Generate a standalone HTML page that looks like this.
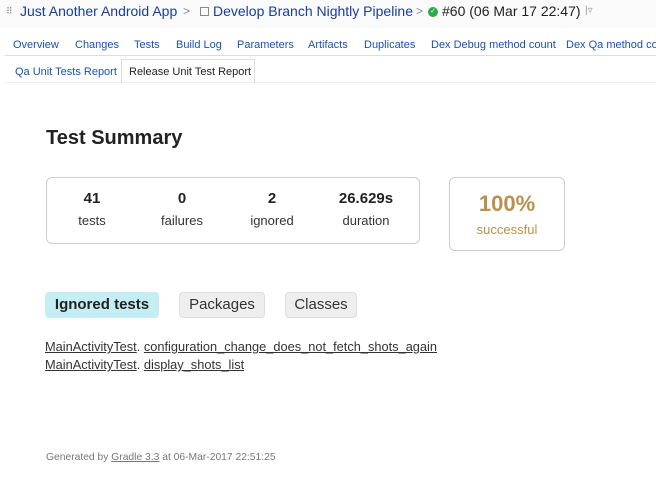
<!DOCTYPE html>
<html><head><style>
body{margin:0;width:656px;height:491px;background:#fff;font-family:"Liberation Sans",sans-serif;position:relative;overflow:hidden}
.a{position:absolute;white-space:nowrap}
.bc{top:3px;font-size:14px;color:#1a3d9c}
.tab{top:39px;font-size:11px;color:#1a52b0}
.num{font-size:15px;font-weight:bold;color:#222;text-align:center;width:80px}
.lbl{font-size:13px;color:#333;text-align:center;width:80px}
.btn{top:292px;height:26px;line-height:26px;font-size:15px;border-radius:4px;text-align:center}
.lnk{font-size:12.8px;color:#333;text-decoration:underline}
</style></head><body>
<div style="position:absolute;left:0;top:0;width:656px;height:28px;background:#fafafa"></div>
<div class="a" style="left:6px;top:6px;font-size:9px;color:#888">⠿</div>
<div class="a bc" style="left:20px">Just Another Android App</div>
<div class="a" style="left:183px;top:4px;font-size:12px;color:#888">&gt;</div>
<div class="a" style="left:200px;top:7px;width:7px;height:7px;border:1px solid #888"></div>
<div class="a bc" style="left:213px">Develop Branch Nightly Pipeline</div>
<div class="a" style="left:416px;top:4px;font-size:12px;color:#888">&gt;</div>
<div class="a" style="left:428px;top:7px;width:10px;height:10px;border-radius:50%;background:#2fa84f;color:#fff;font-size:7px;line-height:10px;text-align:center">✓</div>
<div class="a bc" style="left:442px;color:#222">#60 (06 Mar 17 22:47)</div>
<div class="a" style="left:585px;top:5px;font-size:10px;color:#999">|▿</div>
<div class="a tab" style="left:13px">Overview</div>
<div class="a tab" style="left:75px">Changes</div>
<div class="a tab" style="left:134px">Tests</div>
<div class="a tab" style="left:176px">Build Log</div>
<div class="a tab" style="left:237px">Parameters</div>
<div class="a tab" style="left:308px">Artifacts</div>
<div class="a tab" style="left:364px">Duplicates</div>
<div class="a tab" style="left:431px">Dex Debug method count</div>
<div class="a tab" style="left:566px">Dex Qa method count</div>
<div style="position:absolute;left:5px;top:55px;width:651px;height:1px;background:#ddd"></div>
<div class="a tab" style="left:15px;top:66px">Qa Unit Tests Report</div>
<div style="position:absolute;left:121px;top:59px;width:132px;height:23px;border:1px solid #ddd;border-bottom:none;background:#fff"></div>
<div class="a tab" style="left:129px;top:66px;color:#222">Release Unit Test Report</div>
<div style="position:absolute;left:5px;top:82px;width:651px;height:1px;background:#eee"></div>
<div class="a" style="left:46px;top:127px;font-size:20px;font-weight:bold;color:#222">Test Summary</div>
<div style="position:absolute;left:46px;top:177px;width:372px;height:65px;border:1px solid #ccc;border-radius:6px"></div>
<div class="a num" style="left:52px;top:190px">41</div><div class="a lbl" style="left:52px;top:213px">tests</div>
<div class="a num" style="left:142px;top:190px">0</div><div class="a lbl" style="left:142px;top:213px">failures</div>
<div class="a num" style="left:232px;top:190px">2</div><div class="a lbl" style="left:232px;top:213px">ignored</div>
<div class="a num" style="left:326px;top:190px;width:80px">26.629s</div><div class="a lbl" style="left:326px;top:213px">duration</div>
<div style="position:absolute;left:449px;top:177px;width:114px;height:72px;border:1px solid #ccc;border-radius:6px"></div>
<div class="a" style="left:449px;top:191px;width:116px;text-align:center;font-size:22px;font-weight:bold;color:#b8914e">100%</div>
<div class="a" style="left:449px;top:222px;width:116px;text-align:center;font-size:13px;color:#b8914e">successful</div>
<div class="a btn" style="left:45px;width:114px;background:#c4eef4;font-weight:bold;color:#222">Ignored tests</div>
<div class="a btn" style="left:179px;width:84px;background:#eee;border:1px solid #ddd;height:24px;line-height:24px;color:#333">Packages</div>
<div class="a btn" style="left:285px;width:70px;background:#eee;border:1px solid #ddd;height:24px;line-height:24px;color:#333">Classes</div>
<div class="a" style="left:45px;top:339px;font-size:12.8px;color:#333"><span class="lnk">MainActivityTest</span>. <span class="lnk">configuration_change_does_not_fetch_shots_again</span></div>
<div class="a" style="left:45px;top:357px;font-size:12.8px;color:#333"><span class="lnk">MainActivityTest</span>. <span class="lnk">display_shots_list</span></div>
<div class="a" style="left:46px;top:452px;font-size:10.3px;color:#777">Generated by <span style="text-decoration:underline">Gradle 3.3</span> at 06-Mar-2017 22:51:25</div>
</body></html>
